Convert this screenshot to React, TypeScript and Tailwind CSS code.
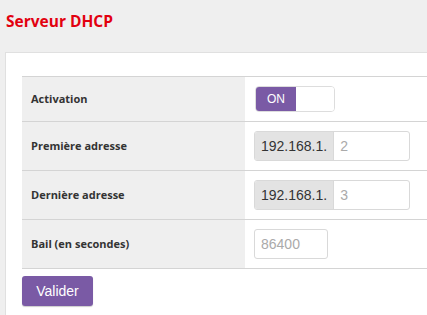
import { useState } from "react";

const rows = [
  { label: "Première adresse", prefix: "192.168.1.", placeholder: "2" },
  { label: "Dernière adresse", prefix: "192.168.1.", placeholder: "3" },
];

export default function App() {
  const [on, setOn] = useState(true);

  return (
    <div className="w-[427px] h-[315px] overflow-hidden bg-[#efefef] font-['Open_Sans',sans-serif] text-[#333]">
      <h1 className="pl-[6px] pt-[11px] h-[52px] text-[15.5px] font-bold text-[#e2000f] leading-[20px]">
        Serveur DHCP
      </h1>
      <div className="ml-[5px] w-[480px] h-[300px] bg-white border-l border-t border-[#e0e0e0] pl-[16px] pt-[23px]">
        <div className="w-[440px] border-b border-[#d4d4d4]">
          <div className="flex border-t border-[#d4d4d4] h-[45px]">
            <div className="w-[223px] bg-[#efefef] pl-[9px] flex items-center text-[11px] font-bold">Activation</div>
            <div className="flex items-center pl-[10px]">
              <button
                onClick={() => setOn(!on)}
                className="flex w-[80px] h-[26px] rounded-[4px] border border-[#ddd] overflow-hidden"
              >
                <span className="w-[40px] h-full bg-[#7a5aa5] text-white text-[12px] flex items-center justify-center font-['Liberation_Sans',sans-serif]">
                  ON
                </span>
                <span className="flex-1 bg-white" />
              </button>
            </div>
          </div>
          {rows.map((r) => (
            <div key={r.label} className="flex border-t border-[#d4d4d4] h-[49px]">
              <div className="w-[223px] bg-[#efefef] pl-[9px] flex items-center text-[11px] font-bold">{r.label}</div>
              <div className="flex items-center pl-[9px]">
                <div className="flex h-[30px] w-[156px] rounded-[3px] border border-[#d9d9d9] overflow-hidden">
                  <span className="bg-[#e3e3e3] px-[6px] flex items-center text-[14px] text-[#333] border-r border-[#d9d9d9] font-['Liberation_Sans',sans-serif]">
                    {r.prefix}
                  </span>
                  <input
                    placeholder={r.placeholder}
                    className="flex-1 min-w-0 px-[6px] text-[14px] outline-none placeholder:text-[#aaa] font-['Liberation_Sans',sans-serif]"
                  />
                </div>
              </div>
            </div>
          ))}
          <div className="flex border-t border-[#d4d4d4] h-[49px]">
            <div className="w-[223px] bg-[#efefef] pl-[9px] flex items-center text-[11px] font-bold">Bail (en secondes)</div>
            <div className="flex items-center pl-[9px]">
              <input
                placeholder="86400"
                className="w-[74px] h-[30px] rounded-[3px] border border-[#d9d9d9] px-[6px] text-[14px] outline-none placeholder:text-[#aaa] font-['Liberation_Sans',sans-serif]"
              />
            </div>
          </div>
        </div>
        <button className="mt-[7px] w-[71px] h-[30px] rounded-[3px] bg-[#7a5aa5] text-white text-[14px] font-['Liberation_Sans',sans-serif] shadow-[0_1px_1px_rgba(0,0,0,0.2)]">
          Valider
        </button>
      </div>
    </div>
  );
}
